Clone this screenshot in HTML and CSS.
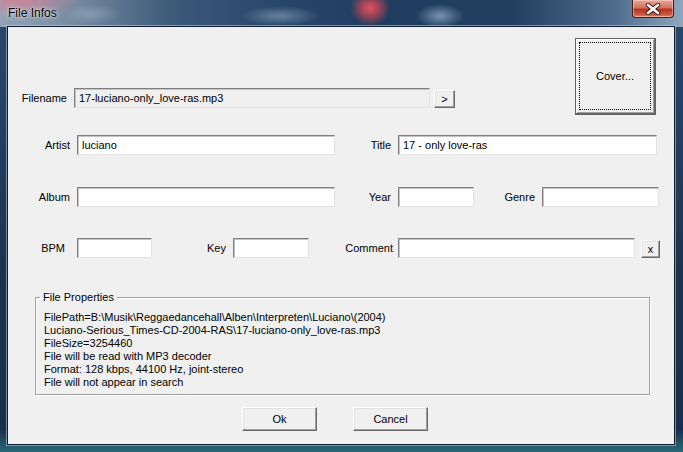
FILE: index.html
```html
<!DOCTYPE html>
<html>
<head>
  <meta charset="UTF-8">
  <link rel="stylesheet" href="styles.css">
  <title>File Infos</title>
</head>
<body>
  <div class="window">
    <div class="titlebar">
      <span class="title">File Infos</span>
      <button class="close" aria-label="Close">
        <svg width="16" height="12" viewBox="0 0 16 12">
          <path d="M3 2 L13 10 M13 2 L3 10" stroke="#3a1010" stroke-width="4.4" stroke-linecap="round"/>
          <path d="M3 2 L13 10 M13 2 L3 10" stroke="#ffffff" stroke-width="2.6" stroke-linecap="round"/>
        </svg>
      </button>
    </div>

    <div class="frame">
      <div class="client">
        <div class="top">
          <div class="row row-file">
            <label class="lbl">Filename</label>
            <div class="field readonly">17-luciano-only_love-ras.mp3</div>
            <button class="btn btn-small">&gt;</button>
          </div>
          <button class="btn btn-cover"><span class="focus">Cover...</span></button>
        </div>

        <div class="row row-artist">
          <label class="lbl">Artist</label>
          <div class="field">luciano</div>
          <label class="lbl">Title</label>
          <div class="field">17 - only love-ras</div>
        </div>

        <div class="row row-album">
          <label class="lbl">Album</label>
          <div class="field"></div>
          <label class="lbl">Year</label>
          <div class="field"></div>
          <label class="lbl">Genre</label>
          <div class="field"></div>
        </div>

        <div class="row row-bpm">
          <label class="lbl lbl-bpm">BPM</label>
          <div class="field"></div>
          <label class="lbl">Key</label>
          <div class="field"></div>
          <label class="lbl lbl-comment">Comment</label>
          <div class="field"></div>
          <button class="btn btn-small btn-x">x</button>
        </div>

        <fieldset class="props">
          <legend>File Properties</legend>
          <div class="line">FilePath=B:\Musik\Reggaedancehall\Alben\Interpreten\Luciano\(2004)</div>
          <div class="line">Luciano-Serious_Times-CD-2004-RAS\17-luciano-only_love-ras.mp3</div>
          <div class="line">FileSize=3254460</div>
          <div class="line">File will be read with MP3 decoder</div>
          <div class="line">Format: 128 kbps, 44100 Hz, joint-stereo</div>
          <div class="line">File will not appear in search</div>
        </fieldset>

        <div class="actions">
          <button class="btn btn-dlg">Ok</button>
          <button class="btn btn-dlg">Cancel</button>
        </div>
      </div>
    </div>
  </div>
</body>
</html>
```

FILE: styles.css
```css
  body {
    margin: 0;
    background: #1d3552;
    font-family: "Liberation Sans", Arial, sans-serif;
    font-size: 11px;
    color: #000;
  }

  .window {
    width: 683px;
    height: 452px;
    display: flex;
    flex-direction: column;
    background: linear-gradient(180deg, #2b4a6c 0%, #1c3350 60%, #16304a 95%, #2a6a78 100%);
    overflow: hidden;
  }

  /* glass title bar */
  .titlebar {
    height: 27px;
    flex: none;
    display: flex;
    align-items: flex-start;
    background:
      radial-gradient(ellipse 20px 18px at 370px 8px, rgba(230, 80, 95, 1), rgba(214, 70, 82, 0.6) 50%, rgba(214, 70, 82, 0) 100%),
      radial-gradient(ellipse 60px 14px at 20px 2px, rgba(210, 130, 150, 0.9), rgba(200, 140, 155, 0) 100%),
      radial-gradient(ellipse 24px 12px at 440px 16px, rgba(160, 185, 210, 0.7), rgba(150, 175, 200, 0) 100%),
      radial-gradient(ellipse 40px 10px at 280px 16px, rgba(130, 155, 180, 0.7), rgba(120, 145, 170, 0) 100%),
      radial-gradient(ellipse 30px 10px at 90px 14px, rgba(150, 170, 190, 0.6), rgba(150, 170, 190, 0) 100%),
      linear-gradient(90deg, #94a4b6 0%, #72879d 12%, #3d5a7a 25%, #28476a 40%, #1f3d60 55%, #21405f 75%, #4e6d8d 90%, #8fa6bd 100%);
  }

  .title {
    margin: 6px 0 0 8px;
    font-size: 12px;
    line-height: 14px;
    color: #000;
    text-shadow: 0 0 6px rgba(255, 255, 255, 0.9), 0 0 2px rgba(255, 255, 255, 0.9);
  }

  .close {
    margin-left: auto;
    margin-right: 9px;
    width: 42px;
    height: 18px;
    padding: 0;
    border: 1px solid #4a1a1a;
    border-top: none;
    border-radius: 0 0 4px 4px;
    background: linear-gradient(180deg, #e8a898 0%, #d3725e 45%, #b8321f 55%, #c9573f 85%, #e08a6c 100%);
    box-shadow: inset 0 0 0 1px rgba(255, 220, 210, 0.5);
    display: flex;
    align-items: center;
    justify-content: center;
  }

  .frame {
    flex: 1;
    padding: 0 9px 8px 8px;
    display: flex;
  }

  .client {
    flex: 1;
    background: #f0f0f0;
    padding-top: 11px;
    box-shadow: 0 0 0 1px #0e1d2e, 0 0 0 2px rgba(200, 215, 230, 0.55);
  }

  /* rows of controls */
  .top {
    display: flex;
    align-items: flex-start;
    height: 77px;
  }

  .row {
    display: grid;
    align-items: center;
    height: 20px;
  }

  .row-file {
    margin-top: 49px;
    grid-template-columns: 66px 356px 21px;
  }

  .row-file .btn-small {
    margin-left: 4px;
  }

  .row-artist {
    margin-top: 20px;
    grid-template-columns: 69px 258px 63px 259px;
  }

  .row-album {
    margin-top: 32px;
    grid-template-columns: 69px 258px 63px 76px 68px 117px;
  }

  .row-bpm {
    margin-top: 31px;
    grid-template-columns: 69px 75px 81px 76px 89px 237px 25px;
  }

  .lbl {
    text-align: right;
    padding-right: 7px;
    white-space: nowrap;
  }

  .lbl-bpm {
    padding-right: 12px;
  }

  .lbl-comment {
    padding-right: 5px;
  }

  .field {
    box-sizing: border-box;
    height: 20px;
    padding: 0 4px;
    line-height: 18px;
    background: #fff;
    border: 1px solid;
    border-color: #7f7f7f #e3e3e3 #e3e3e3 #7f7f7f;
    box-shadow: inset 1px 1px 0 #c4c4c4;
    white-space: nowrap;
    overflow: hidden;
  }

  .field.readonly {
    background: #f0f0f0;
  }

  /* buttons */
  .btn {
    box-sizing: border-box;
    font-family: "Liberation Sans", Arial, sans-serif;
    font-size: 11px;
    color: #000;
    background: #f0f0f0;
    border: 1px solid;
    border-color: #fff #696969 #696969 #fff;
    box-shadow: inset -1px -1px 0 #a0a0a0, inset 1px 1px 0 #e3e3e3;
    padding: 0;
    cursor: pointer;
  }

  .btn-small {
    width: 21px;
    height: 18px;
    margin-top: 3px;
    line-height: 14px;
  }

  .btn-x {
    width: 19px;
    margin: 1px 0 0 6px;
  }

  .btn-cover {
    margin-left: auto;
    margin-right: 18px;
    width: 81px;
    height: 77px;
    border: 1px solid #646464;
    border-right-width: 2px;
    border-bottom-width: 2px;
    box-shadow: inset 1px 1px 0 #fff, inset -1px -1px 0 #a0a0a0;
    padding: 3px;
    display: flex;
  }

  .focus {
    flex: 1;
    border: 1px dotted #000;
    display: flex;
    align-items: center;
    justify-content: center;
  }

  /* file properties group */
  .props {
    margin: 33px 0 0 27px;
    width: 615px;
    box-sizing: border-box;
    padding: 7px 8px 5px 8px;
    border: 1px solid #a0a0a0;
    box-shadow: inset 1px 1px 0 #fff, 1px 1px 0 #fff;
  }

  .props legend {
    margin-left: -4px;
    padding: 0 3px;
    line-height: 13px;
  }

  .line {
    line-height: 13px;
    white-space: nowrap;
  }

  .actions {
    display: flex;
    gap: 36px;
    margin: 12px 0 0 234px;
  }

  .btn-dlg {
    width: 75px;
    height: 24px;
  }
```
